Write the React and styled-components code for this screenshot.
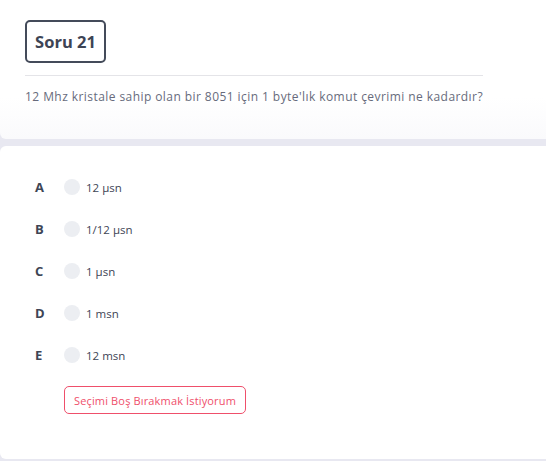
import styled, { createGlobalStyle } from "styled-components";

const GlobalStyle = createGlobalStyle`
  body {
    margin: 0;
    background: #e8e8f1;
    font-family: "Open Sans", "Noto Sans", sans-serif;
  }
`;

const options = [
  { key: "A", text: "12 µsn" },
  { key: "B", text: "1/12 µsn" },
  { key: "C", text: "1 µsn" },
  { key: "D", text: "1 msn" },
  { key: "E", text: "12 msn" }
];

const App = () => {
  return (
    <Page>
      <GlobalStyle />
      <QuestionCard>
        <Badge>Soru 21</Badge>
        <Divider />
        <Question>12 Mhz kristale sahip olan bir 8051 için 1 byte'lık komut çevrimi ne kadardır?</Question>
      </QuestionCard>
      <AnswerCard>
        {
          options.map(o => (
            <Option key={ o.key }>
              <Letter>{ o.key }</Letter>
              <Radio />
              <OptionText>{ o.text }</OptionText>
            </Option>
          ))
        }
        <SkipButton>Seçimi Boş Bırakmak İstiyorum</SkipButton>
      </AnswerCard>
    </Page>
  );
};

export default App;

const Page = styled.div`
  width: 560px;
  display: flex;
  flex-direction: column;
  gap: 7px;
  padding-bottom: 2px;
`

const QuestionCard = styled.div`
  height: 139px;
  box-sizing: border-box;
  padding: 20px 0 0 25px;
  background: linear-gradient(to bottom, #ffffff 70%, #fafafc);
  border-radius: 0 0 6px 6px;
  display: flex;
  flex-direction: column;
  align-items: flex-start;
`

const Badge = styled.div`
  box-sizing: border-box;
  height: 43px;
  width: 81px;
  border: 2px solid #444b5a;
  border-radius: 5px;
  display: flex;
  align-items: center;
  justify-content: center;
  font-size: 16.5px;
  font-weight: 700;
  color: #3d4454;
`

const Divider = styled.div`
  width: 458px;
  height: 1px;
  background: #e4e4e8;
  margin-top: 12px;
`

const Question = styled.p`
  margin: 12px 0 0;
  font-size: 12px;
  color: #676b7c;
  letter-spacing: 0.43px;
  white-space: nowrap;
`

const AnswerCard = styled.div`
  height: 313px;
  box-sizing: border-box;
  background: #fff;
  border-radius: 6px;
  padding: 30px 0 0 35px;
  display: flex;
  flex-direction: column;
  align-items: flex-start;
`

const Option = styled.div`
  display: flex;
  align-items: center;
  height: 22px;
  margin-bottom: 20px;
`

const Letter = styled.span`
  width: 29px;
  font-size: 13px;
  font-weight: 700;
  color: #3e4555;
`

const Radio = styled.span`
  width: 16px;
  height: 16px;
  border-radius: 50%;
  background: #eceef2;
  margin-right: 6px;
`

const OptionText = styled.span`
  font-size: 11.5px;
  color: #3e4555;
`

const SkipButton = styled.button`
  margin: 0 0 0 29px;
  height: 28px;
  width: 182px;
  border: 1px solid #ef4f6b;
  border-radius: 5px;
  background: #fff;
  color: #ef4f6b;
  font-family: inherit;
  font-size: 11px;
  letter-spacing: 0.15px;
  padding: 0;
`
